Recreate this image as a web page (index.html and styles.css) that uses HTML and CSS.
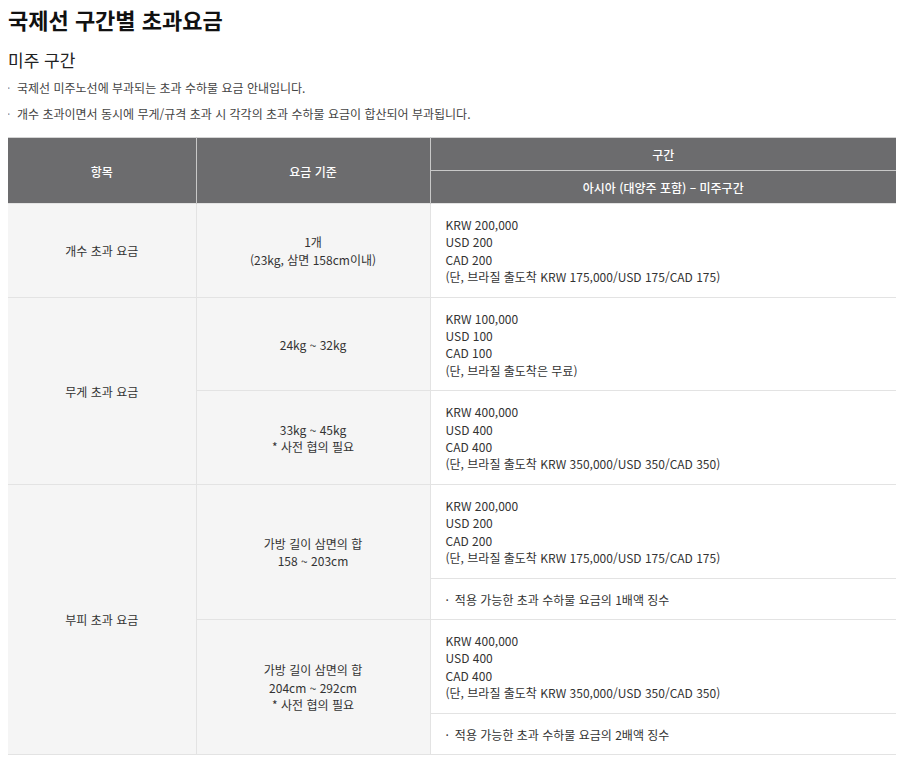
FILE: index.html
```html
<!DOCTYPE html>
<html lang="ko">
<head>
<meta charset="utf-8">
<title>국제선 구간별 초과요금</title>
<link rel="stylesheet" href="styles.css">
</head>
<body>
<h1 class="title">국제선 구간별 초과요금</h1>
<h2 class="subtitle">미주 구간</h2>
<ul class="notes">
  <li>국제선 미주노선에 부과되는 초과 수하물 요금 안내입니다.</li>
  <li>개수 초과이면서 동시에 무게/규격 초과 시 각각의 초과 수하물 요금이 합산되어 부과됩니다.</li>
</ul>
<table class="fees">
  <colgroup>
    <col class="c1"><col class="c2"><col class="c3">
  </colgroup>
  <thead>
    <tr>
      <th rowspan="2">항목</th>
      <th rowspan="2">요금 기준</th>
      <th>구간</th>
    </tr>
    <tr>
      <th class="sub">아시아 (대양주 포함) – 미주구간</th>
    </tr>
  </thead>
  <tbody>
    <tr>
      <td class="item">개수 초과 요금</td>
      <td class="basis">1개<br>(23kg, 삼면 158cm이내)</td>
      <td class="price">KRW 200,000<br>USD 200<br>CAD 200<br>(단, 브라질 출도착 KRW 175,000/USD 175/CAD 175)</td>
    </tr>
    <tr>
      <td class="item" rowspan="2">무게 초과 요금</td>
      <td class="basis">24kg ~ 32kg</td>
      <td class="price">KRW 100,000<br>USD 100<br>CAD 100<br>(단, 브라질 출도착은 무료)</td>
    </tr>
    <tr>
      <td class="basis">33kg ~ 45kg<br>* 사전 협의 필요</td>
      <td class="price">KRW 400,000<br>USD 400<br>CAD 400<br>(단, 브라질 출도착 KRW 350,000/USD 350/CAD 350)</td>
    </tr>
    <tr>
      <td class="item" rowspan="4">부피 초과 요금</td>
      <td class="basis" rowspan="2">가방 길이 삼면의 합<br>158 ~ 203cm</td>
      <td class="price">KRW 200,000<br>USD 200<br>CAD 200<br>(단, 브라질 출도착 KRW 175,000/USD 175/CAD 175)</td>
    </tr>
    <tr>
      <td class="price dot">적용 가능한 초과 수하물 요금의 1배액 징수</td>
    </tr>
    <tr>
      <td class="basis" rowspan="2">가방 길이 삼면의 합<br>204cm ~ 292cm<br>* 사전 협의 필요</td>
      <td class="price">KRW 400,000<br>USD 400<br>CAD 400<br>(단, 브라질 출도착 KRW 350,000/USD 350/CAD 350)</td>
    </tr>
    <tr>
      <td class="price dot">적용 가능한 초과 수하물 요금의 2배액 징수</td>
    </tr>
  </tbody>
</table>
</body>
</html>
```
FILE: styles.css
```css
body {
  margin: 8px 4px 8px 8px;
  font-family: "Noto Sans CJK KR", "Noto Sans", sans-serif;
  color: #333;
  background: #fff;
}
.title {
  margin: 0;
  font-size: 22px;
  line-height: 22px;
  font-weight: 700;
  color: #111;
}
.subtitle {
  margin: 18px 0 0;
  font-size: 17px;
  line-height: 24px;
  font-weight: 400;
  color: #222;
}
.notes {
  list-style: none;
  margin: 7px 0 0;
  padding: 0;
  font-size: 12px;
  line-height: 18px;
  color: #444;
}
.notes li {
  position: relative;
  padding-left: 9px;
  margin-bottom: 8px;
}
.notes li::before {
  content: "·";
  position: absolute;
  left: -1px;
  top: 0;
  color: #999;
}
.fees {
  margin-top: 14px;
  width: 100%;
  border-collapse: collapse;
  table-layout: fixed;
  font-size: 12px;
  line-height: 17.4px;
}
.c1 { width: 188px; }
.c2 { width: 234px; }
.c3 { width: auto; }
.fees thead th {
  background: #6c6c6e;
  color: #fff;
  font-weight: 500;
  padding: 8px 10px 7px;
  line-height: 17px;
  border: 1px solid #c8c8c8;
  border-bottom: 0;
  text-align: center;
}
.fees thead tr:first-child th { border-top: 1px solid #d4d4d4; }
.fees thead th:first-child { border-left: 0; }
.fees thead th:last-child { border-right: 0; }
.fees thead th.sub { border-top: 1px solid #c8c8c8; }
.fees td {
  border: 1px solid #e3e3e3;
  padding: 12px 15px 11px;
  vertical-align: middle;
}
.fees td.item,
.fees td.basis {
  background: #f5f5f5;
  text-align: center;
}
.fees td.item { border-left: 0; }
.fees td.price {
  background: #fff;
  text-align: left;
  border-right: 0;
}
.fees td.dot::before {
  content: "·";
  margin-right: 6px;
}
```
